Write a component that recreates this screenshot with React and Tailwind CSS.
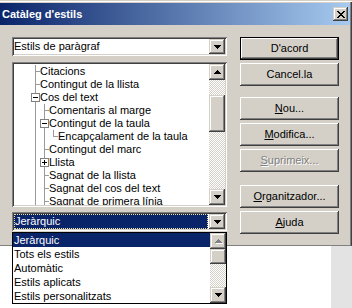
import React from 'react';

const PUSH = "shadow-[inset_-1px_-1px_0_#404040,inset_1px_1px_0_#ffffff,inset_-2px_-2px_0_#808080,inset_2px_2px_0_#d4d0c8]";
const RAISED = "shadow-[inset_-1px_-1px_0_#404040,inset_1px_1px_0_#d4d0c8,inset_-2px_-2px_0_#808080,inset_2px_2px_0_#ffffff]";
const SUNKEN = "shadow-[inset_1px_1px_0_#808080,inset_-1px_-1px_0_#ffffff,inset_2px_2px_0_#404040,inset_-2px_-2px_0_#d4d0c8]";
const TRACK = "bg-[conic-gradient(#ffffff_25%,#d4d0c8_0_50%,#ffffff_0_75%,#d4d0c8_0)] bg-[length:2px_2px]";

function Tri({ dir = 'down', disabled = false }) {
  const down = "M0 0H7V1H6V2H5V3H4V4H3V3H2V2H1V1H0Z";
  const up = "M3 0H4V1H5V2H6V3H7V4H0V3H1V2H2V1H3Z";
  const d = dir === 'down' ? down : up;
  return (
    <svg width="8" height="5" viewBox="0 0 8 5" shapeRendering="crispEdges">
      {disabled && <path d={d} fill="#ffffff" transform="translate(1 1)" />}
      <path d={d} fill={disabled ? '#808080' : '#000000'} />
    </svg>
  );
}

function ScrollBtn({ dir, disabled, h = 'h-[16px]' }) {
  return (
    <div className={`w-[16px] ${h} bg-[#d4d0c8] ${RAISED} flex items-center justify-center pl-[1px] pt-[1px]`}>
      <Tri dir={dir} disabled={disabled} />
    </div>
  );
}

const LINE = '#9a9a9a';

function Cell({ type }) {
  return (
    <svg width="9" height="13" viewBox="0 0 9 13" shapeRendering="crispEdges" className="shrink-0">
      {type === 'I' && <rect x="4" y="0" width="1" height="13" fill={LINE} />}
      {type === 'T' && (
        <>
          <rect x="4" y="0" width="1" height="13" fill={LINE} />
          <rect x="5" y="6" width="4" height="1" fill={LINE} />
        </>
      )}
      {type === 'L' && (
        <>
          <rect x="4" y="0" width="1" height="7" fill={LINE} />
          <rect x="5" y="6" width="4" height="1" fill={LINE} />
        </>
      )}
      {(type === 'minus' || type === 'plus') && (
        <>
          <rect x="4" y="0" width="1" height="2" fill={LINE} />
          <rect x="4" y="11" width="1" height="2" fill={LINE} />
          <rect x="0.5" y="2.5" width="8" height="8" fill="#ffffff" stroke="#808080" strokeWidth="1" />
          <rect x="2" y="6" width="5" height="1" fill="#000000" />
          {type === 'plus' && <rect x="4" y="4" width="1" height="5" fill="#000000" />}
        </>
      )}
    </svg>
  );
}

const ROWS = [
  { cells: ['T'], text: 'Citacions' },
  { cells: ['T'], text: 'Contingut de la llista' },
  { cells: ['minus'], text: 'Cos del text' },
  { cells: ['I', 'T'], text: 'Comentaris al marge' },
  { cells: ['I', 'minus'], text: 'Contingut de la taula' },
  { cells: ['I', 'I', 'L'], text: 'Encapçalament de la taula' },
  { cells: ['I', 'T'], text: 'Contingut del marc' },
  { cells: ['I', 'plus'], text: 'Llista' },
  { cells: ['I', 'T'], text: 'Sagnat de la llista' },
  { cells: ['I', 'T'], text: 'Sagnat del cos del text' },
  { cells: ['I', 'T'], text: 'Sagnat de primera línia' },
];

function Button({ children, def, disabled, className = '' }) {
  return (
    <div
      className={`h-[23px] w-full bg-[#d4d0c8] ${def ? 'border border-black' : ''} ${className} flex items-center justify-center`}
    >
      <div className={`w-full h-full ${PUSH} flex items-center justify-center leading-none ${disabled ? 'text-[#808080] [text-shadow:1px_1px_0_#ffffff]' : 'text-black'}`}>
        {children}
      </div>
    </div>
  );
}

export default function App() {
  return (
    <div className="relative w-[352px] h-[308px] overflow-hidden bg-white font-['Liberation_Sans',Arial,sans-serif] text-[11px] text-black flex flex-col">
      {/* Dialog */}
      <div className="h-[246px] shrink-0 flex flex-col bg-[#d4d0c8] pt-[3px] pr-[2px] shadow-[inset_0_1px_0_#d4d0c8,inset_0_2px_0_#ffffff,inset_-1px_0_0_#404040,inset_-2px_0_0_#808080,inset_0_-1px_0_#808080]">
        {/* Title bar */}
        <div className="h-[22px] shrink-0 flex items-center justify-between pl-[2px] pr-[2px] bg-[linear-gradient(to_right,#0a246a,#a6caf0)]">
          <span className="text-white font-bold text-[11px] leading-none whitespace-nowrap">Catàleg d'estils</span>
          <div className={`w-[15px] h-[14px] bg-[#d4d0c8] ${RAISED} flex items-center justify-center`}>
            <svg width="8" height="7" viewBox="0 0 8 7" shapeRendering="crispEdges">
              <path d="M0 0H2V1H3V2H5V1H6V0H8V1H7V2H6V3H5V4H6V5H7V6H8V7H6V6H5V5H3V6H2V7H0V6H1V5H2V4H3V3H2V2H1V1H0Z" fill="#000" />
            </svg>
          </div>
        </div>

        {/* Body */}
        <div className="flex pt-[12px] pl-[12px]">
          {/* Left column */}
          <div className="w-[215px] flex flex-col">
            {/* Top combo */}
            <div className={`h-[19px] bg-white ${SUNKEN} p-[2px] flex`}>
              <div className="flex-1 flex items-center whitespace-nowrap leading-none">Estils de paràgraf</div>
              <ScrollBtn dir="down" h="h-[15px]" />
            </div>

            {/* Tree list */}
            <div className={`mt-[6px] h-[145px] bg-white ${SUNKEN} p-[2px] flex`}>
              <div className="flex-1 overflow-hidden pt-[1px] flex flex-col">
                {ROWS.map((r, i) => (
                  <div key={i} className="h-[13px] shrink-0 flex items-center">
                    <div className="w-[17px] shrink-0" />
                    {r.cells.map((c, j) => (
                      <Cell key={j} type={c} />
                    ))}
                    <span className="leading-[13px] whitespace-nowrap">{r.text}</span>
                  </div>
                ))}
              </div>
              <div className="w-[16px] flex flex-col">
                <ScrollBtn dir="up" />
                <div className={`h-[15px] ${TRACK}`} />
                <div className={`h-[37px] bg-[#d4d0c8] ${RAISED}`} />
                <div className={`flex-1 ${TRACK}`} />
                <ScrollBtn dir="down" />
              </div>
            </div>

            {/* Bottom combo */}
            <div className={`mt-[5px] h-[19px] bg-white ${SUNKEN} p-[2px] flex`}>
              <div className="flex-1 mr-[1px] bg-[#0a246a] border border-dotted border-[#f0e0a0] flex items-center text-white whitespace-nowrap leading-none">
                Jeràrquic
              </div>
              <ScrollBtn dir="down" h="h-[15px]" />
            </div>
          </div>

          {/* Right column */}
          <div className="ml-[13px] w-[99px] flex flex-col">
            <Button def>D'acord</Button>
            <Button className="mt-[3px]">Cancel.la</Button>
            <Button className="mt-[11px]"><span><u>N</u>ou...</span></Button>
            <Button className="mt-[3px]"><span><u>M</u>odifica...</span></Button>
            <Button className="mt-[3px]" disabled><span><u>S</u>uprimeix...</span></Button>
            <Button className="mt-[13px]"><span><u>O</u>rganitzador...</span></Button>
            <Button className="mt-[3px]"><span><u>A</u>juda</span></Button>
          </div>
        </div>
      </div>

      {/* Below dialog */}
      <div className="flex-1 flex">
        <div className="flex-1 bg-white" />
        <div className="w-[21px] bg-[#e3e3e3]" />
      </div>

      {/* Dropdown popup */}
      <div className="absolute left-[12px] top-[232px] w-[215px] h-[72px] border border-black bg-white flex">
        <div className="flex-1 flex flex-col">
          {['Jeràrquic', 'Tots els estils', 'Automàtic', 'Estils aplicats', 'Estils personalitzats'].map((t, i) => (
            <div
              key={t}
              className={`h-[14px] shrink-0 pl-[1px] leading-[14px] whitespace-nowrap ${i === 0 ? 'bg-[#0a246a] text-white' : 'text-black'}`}
            >
              {t}
            </div>
          ))}
        </div>
        <div className="w-[16px] flex flex-col">
          <ScrollBtn dir="up" disabled />
          <div className={`h-[15px] bg-[#d4d0c8] ${RAISED}`} />
          <div className={`flex-1 ${TRACK}`} />
          <ScrollBtn dir="down" />
        </div>
      </div>
    </div>
  );
}
